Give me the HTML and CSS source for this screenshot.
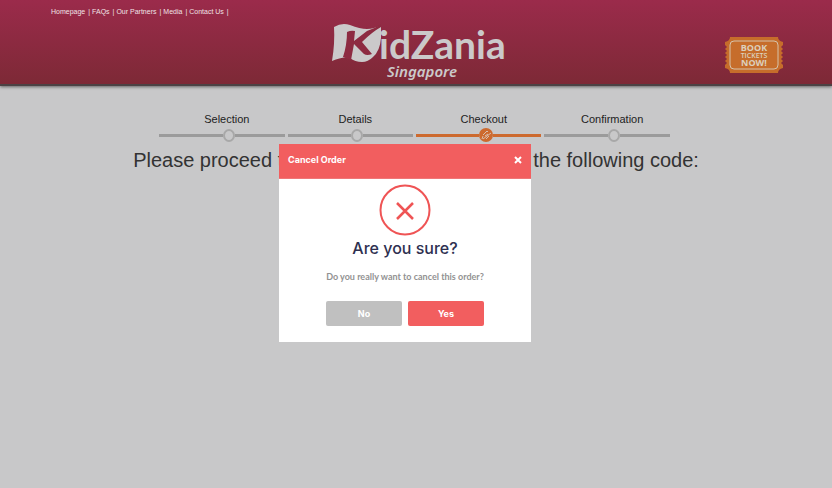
FILE: index.html
```html
<!DOCTYPE html>
<html lang="en">
<head>
<meta charset="utf-8">
<title>KidZania Singapore</title>
<meta name="viewport" content="width=device-width, initial-scale=1">
<link rel="stylesheet" href="styles.css">
</head>
<body>
<header class="header">
  <nav class="nav">
    <a href="#">Homepage</a><a href="#">FAQs</a><a href="#">Our Partners</a><a href="#">Media</a><a href="#">Contact Us</a>
  </nav>
  <a class="logo" href="#">
    <svg width="176" height="60" viewBox="0 0 176 60" role="img">
      <path class="flag" d="M4 4Q12 -1 20 2Q30 6 37 6Q44 6 51 2L51 15Q50 28 43 34Q38 39 32 39Q25 39 20 35Q13 33 2 38Q5 20 4 4Z"/>
      <path class="flag-k" d="M17 9Q21 7 25 8L24 18L37 8Q44 6 51 1L51 4Q42 9 32 19L42 31Q37 33 34 31L24 21L21 37L13 34Q17 22 17 9Z"/>
      <text class="logo-name" x="49" y="36">idZania</text>
      <text class="logo-city" x="57" y="54">Singapore</text>
    </svg>
  </a>
  <a class="ticket" href="#">
    <svg width="60" height="38" viewBox="0 0 60 38" role="img">
      <path class="ticket-body" d="M6 1H54Q54 5 59 6V9L57 11L59 13L57 15L59 17L57 19L59 21L57 23L59 25L57 27L59 29V32Q54 33 54 37H6Q6 33 1 32V29L3 27L1 25L3 23L1 21L3 19L1 17L3 15L1 13L3 11L1 9V6Q6 5 6 1Z"/>
      <rect class="ticket-line" x="6" y="5" width="48" height="28" rx="4"/>
      <text class="ticket-big" x="30" y="15">BOOK</text>
      <text class="ticket-small" x="30" y="22">TICKETS</text>
      <text class="ticket-big" x="30" y="30">NOW!</text>
    </svg>
  </a>
</header>
<main class="main">
  <ol class="steps">
    <li class="step"><span class="label">Selection</span><span class="track"><i class="dot"></i></span></li>
    <li class="step"><span class="label">Details</span><span class="track"><i class="dot"></i></span></li>
    <li class="step active"><span class="label">Checkout</span><span class="track"><svg class="mark" width="14" height="14" viewBox="0 0 14 14"><circle class="mark-disc" cx="7" cy="7" r="7"/><path class="mark-line" d="M4 7L8 3L9 4M4 11L12 5M6 8L9 6M4 8L3 11M7 11L10 8"/></svg></span></li>
    <li class="step"><span class="label">Confirmation</span><span class="track"><i class="dot"></i></span></li>
  </ol>
  <p class="notice"><span>Please proceed to</span><span>the following code:</span></p>
</main>
<div class="overlay">
  <section class="modal" role="dialog" aria-labelledby="modal-title">
    <div class="modal-head">
      <h2 class="modal-title" id="modal-title">Cancel Order</h2>
      <button class="close" type="button"><svg width="8" height="8" viewBox="0 0 8 8"><path d="M1 1L7 7M7 1L1 7"/></svg></button>
    </div>
    <div class="modal-body">
      <svg class="alert" width="52" height="52" viewBox="0 0 52 52"><circle cx="26" cy="26" r="24.5"/><path class="alert-x" d="M18 19L34 35M34 19L18 35"/></svg>
      <h3 class="question">Are you sure?</h3>
      <p class="detail">Do you really want to cancel this order?</p>
      <div class="actions">
        <button class="btn no" type="button">No</button>
        <button class="btn yes" type="button">Yes</button>
      </div>
    </div>
  </section>
</div>
</body>
</html>
```
FILE: styles.css
```css
* { box-sizing: border-box; }
body {
  margin: 0;
  min-height: 100vh;
  background: #c8c8c9;
  color: #333;
  font-family: "Liberation Sans", Arial, sans-serif;
}
.header {
  display: grid;
  grid-template-columns: 1fr auto 1fr;
  height: 86px;
  padding: 0 48px 0 51px;
  background: linear-gradient(#9b2b4b, #7d2936);
  border-bottom: 2px solid #4c4244;
  box-shadow: 0 1px 3px #666;
}
.nav {
  padding-top: 8px;
  font-size: 7px;
  line-height: 8px;
  white-space: nowrap;
}
.nav a { color: #f0e2e6; text-decoration: none; }
.nav a::after { content: "|"; margin: 0 2px 0 3px; }
.logo { padding-top: 23px; }
.logo svg, .ticket svg { display: block; overflow: visible; }
.flag, .logo-name, .logo-city { fill: #cbc9ca; }
.flag-k { fill: #8d2a41; }
.logo-name { font: 700 39px Lato, sans-serif; }
.logo-city { font: italic 600 15px "Noto Sans", sans-serif; }
.ticket { justify-self: end; padding-top: 36px; }
.ticket-body { fill: #c66d2b; }
.ticket-line { fill: none; stroke: #d5c3ab; stroke-width: 1; }
.ticket-big, .ticket-small {
  fill: #dcd0bd;
  font: 700 9px "Open Sans", sans-serif;
  text-anchor: middle;
}
.ticket-small { font-size: 7px; font-weight: 600; }
.main {
  width: 68%;
  margin: 0 auto;
  padding-top: 26px;
}
.steps {
  display: grid;
  grid-template-columns: repeat(4, 1fr);
  gap: 3px;
  margin: 0 29px 0 26px;
  padding: 0;
  list-style: none;
}
.step {
  color: #222;
  font-size: 11px;
  line-height: 15px;
  text-align: center;
}
.label {
  display: block;
  padding-left: 10px;
}
.track {
  display: flex;
  align-items: center;
  height: 16px;
}
.track::before, .track::after {
  flex: 7;
  height: 3px;
  background: #9b9b9b;
  content: "";
}
.track::before { flex: 9; }
.dot {
  width: 12px;
  height: 13px;
  border: 2px solid #a8a8a8;
  border-radius: 50%;
}
.active .track::before, .active .track::after { background: #cd6a2e; }
.mark-disc { fill: #cd6a2e; }
.mark-line { fill: none; stroke: #d9bfae; stroke-width: 1; }
.notice {
  display: flex;
  justify-content: space-between;
  margin: 5px 0 0;
  font-size: 20px;
  line-height: 24px;
}
.overlay {
  position: fixed;
  inset: 0;
  display: flex;
  align-items: center;
  justify-content: center;
  padding: 0 22px 2px 0;
}
.modal {
  width: 252px;
  background: #fff;
  font-family: Lato, sans-serif;
}
.modal-head {
  display: flex;
  align-items: center;
  justify-content: space-between;
  height: 35px;
  padding: 0 9px 2px;
  background: #f25e5f;
  border-bottom: 1px solid #ef7778;
}
.modal-title {
  margin: 0;
  color: #fff;
  font: 700 9px/12px Inter, sans-serif;
}
.close {
  display: flex;
  padding: 0;
  border: 0;
  background: none;
}
.close path { stroke: #fff; stroke-width: 2; }
.modal-body {
  display: flex;
  flex-direction: column;
  align-items: center;
  padding: 5px 0 16px;
}
.alert { fill: none; stroke: #ef5455; stroke-width: 2; }
.alert-x { stroke-width: 2.5; }
.question {
  margin: 2px 0 0;
  color: #2e3050;
  font: 500 16px/20px Inter, sans-serif;
}
.detail {
  margin: 13px 0 18px;
  color: #929292;
  font-size: 9px;
  font-weight: 700;
  line-height: 12px;
}
.actions { display: flex; gap: 6px; }
.btn {
  width: 76px;
  height: 25px;
  padding: 0;
  border: 0;
  border-radius: 2px;
  color: #fff;
  font: 700 9px Inter, sans-serif;
}
.no { background: #c0c0c0; }
.yes { background: #f25e5f; }
```
